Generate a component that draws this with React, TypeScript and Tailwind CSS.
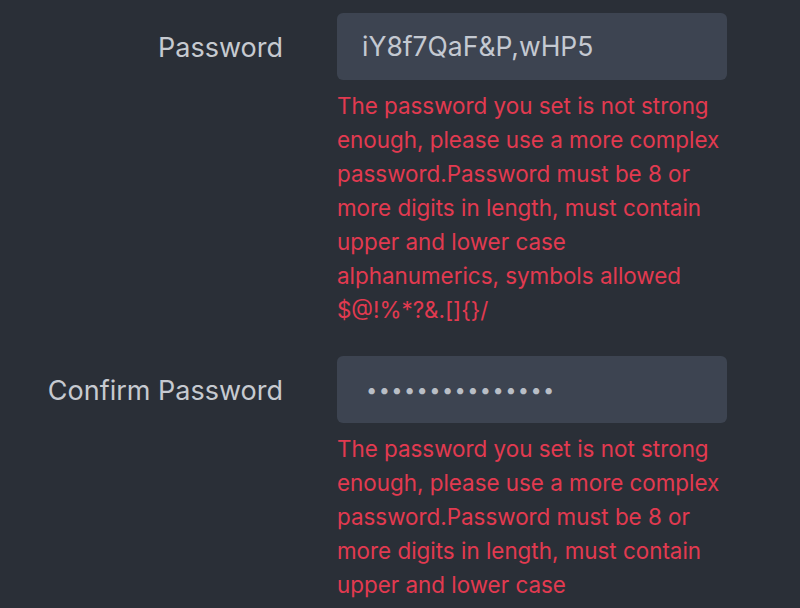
import React from 'react';

const ERROR_MSG =
  'The password you set is not strong enough, please use a more complex password.Password must be 8 or more digits in length, must contain upper and lower case alphanumerics, symbols allowed $@!%*?&.[]{}/';

function Field({ label, children }: { label: string; children: React.ReactNode }) {
  return (
    <div className="flex items-start">
      <div className="w-[283px] h-[67px] pt-[3px] shrink-0 flex items-center justify-end text-[27px] text-[#c6cad0]">
        {label}
      </div>
      <div className="ml-[54px] w-[390px]">
        <div className="h-[67px] rounded-md bg-[#3d4451] flex items-center px-[25px] pt-[1px] text-[26.5px] text-[#c4c9d1]">
          {children}
        </div>
        <p className="mt-[9px] text-[22.4px] leading-[34px] text-[#e23a50]">{ERROR_MSG}</p>
      </div>
    </div>
  );
}

export default function App() {
  return (
    <div
      className="h-screen overflow-hidden bg-[#2a2f37] pt-[13px] flex flex-col gap-[29px]"
      style={{ fontFamily: 'Inter, "Noto Sans", sans-serif' }}
    >
      <Field label="Password">iY8f7QaF&amp;P,wHP5</Field>
      <Field label="Confirm Password">
        <span className="pl-[4px] text-[20px] tracking-[1.4px] text-[#b9bec6]">{'•'.repeat(15)}</span>
      </Field>
    </div>
  );
}
